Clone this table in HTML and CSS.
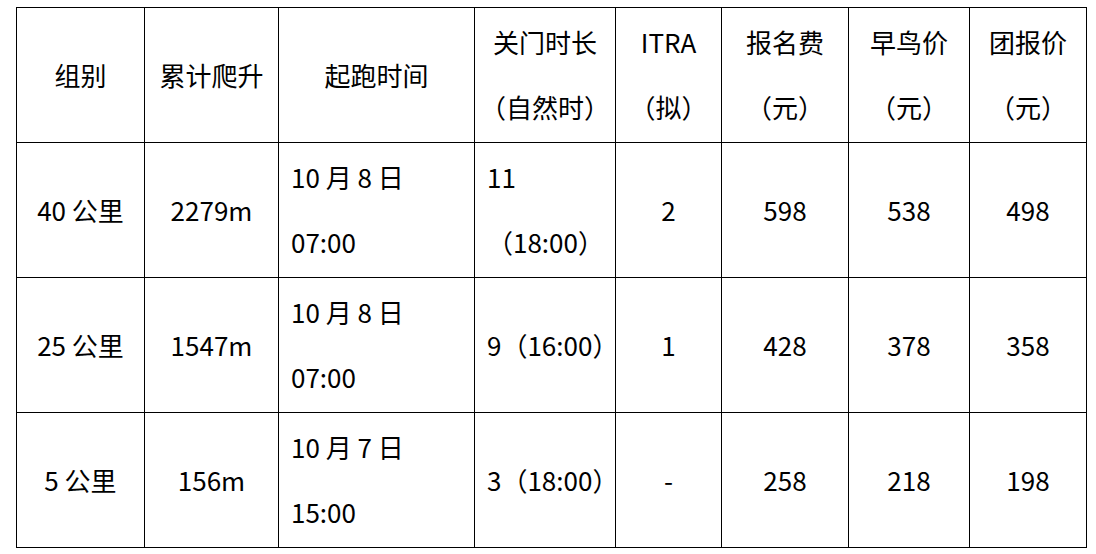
FILE: index.html
```html
<!DOCTYPE html>
<html lang="zh-CN">
<head>
<meta charset="utf-8">
<title>组别</title>
<link rel="stylesheet" href="styles.css">
</head>
<body>
<table class="race">
  <colgroup>
    <col class="c1"><col class="c2"><col class="c3"><col class="c4"><col class="c5"><col class="c6"><col class="c7"><col class="c8">
  </colgroup>
  <tr class="r0">
    <td>组别</td>
    <td>累计爬升</td>
    <td>起跑时间</td>
    <td>关门时长<br>（自然时）</td>
    <td>ITRA<br>（拟）</td>
    <td>报名费<br>（元）</td>
    <td>早鸟价<br>（元）</td>
    <td>团报价<br>（元）</td>
  </tr>
  <tr class="r1">
    <td>40 公里</td>
    <td>2279m</td>
    <td class="left">10 月 8 日<br>07:00</td>
    <td class="left">11<br>（18:00）</td>
    <td>2</td>
    <td>598</td>
    <td>538</td>
    <td>498</td>
  </tr>
  <tr class="r2">
    <td>25 公里</td>
    <td>1547m</td>
    <td class="left">10 月 8 日<br>07:00</td>
    <td class="left">9（16:00）</td>
    <td>1</td>
    <td>428</td>
    <td>378</td>
    <td>358</td>
  </tr>
  <tr class="r3">
    <td>5 公里</td>
    <td>156m</td>
    <td class="left">10 月 7 日<br>15:00</td>
    <td class="left">3（18:00）</td>
    <td>-</td>
    <td>258</td>
    <td>218</td>
    <td>198</td>
  </tr>
</table>
</body>
</html>
```
FILE: styles.css
```css
html, body {
  margin: 0;
  padding: 0;
  background: #ffffff;
}
body {
  padding: 7px 0 0 16px;
  font-family: "Noto Sans CJK SC", "Noto Sans", sans-serif;
  color: #000000;
}
.race {
  border-collapse: collapse;
  table-layout: fixed;
  width: 1070px;
}
.race td {
  border: 1px solid #000000;
  font-size: 26px;
  line-height: 65px;
  text-align: center;
  vertical-align: middle;
  padding: 1px 0 3px 0;
  white-space: nowrap;
}
.race td.left {
  text-align: left;
  padding-left: 12px;
}
.c1 { width: 128px; }
.c2 { width: 134px; }
.c3 { width: 196px; }
.c4 { width: 141px; }
.c5 { width: 106px; }
.c6 { width: 127px; }
.c7 { width: 121px; }
.c8 { width: 117px; }
.r0 td { height: 130px; }
.r1 td { height: 129px; }
.r2 td { height: 130px; }
.r3 td { height: 130px; }
```
